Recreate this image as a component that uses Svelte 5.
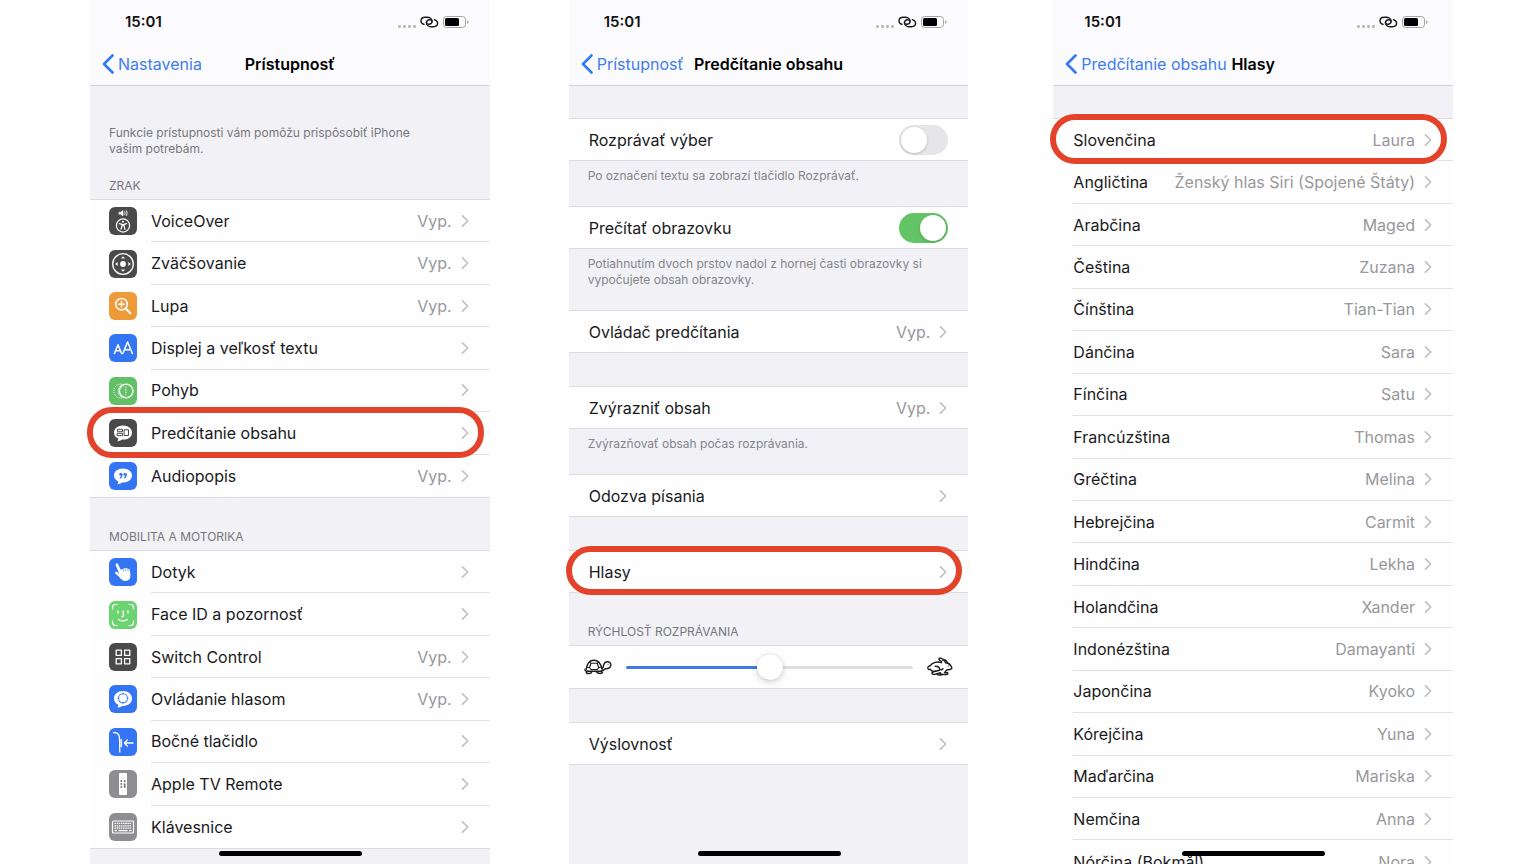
<script>
  const vision = [
    { icon: 'voiceover', label: 'VoiceOver', value: 'Vyp.', color: '#4a4a4b' },
    { icon: 'zoom', label: 'Zväčšovanie', value: 'Vyp.', color: '#4a4a4b' },
    { icon: 'magnifier', label: 'Lupa', value: 'Vyp.', color: '#ee9a38' },
    { icon: 'text', label: 'Displej a veľkosť textu', color: '#3475f3' },
    { icon: 'motion', label: 'Pohyb', color: '#62c166' },
    { icon: 'spoken', label: 'Predčítanie obsahu', color: '#4a4a4b', marked: true },
    { icon: 'audio', label: 'Audiopopis', value: 'Vyp.', color: '#3475f3' }
  ];
  const motor = [
    { icon: 'touch', label: 'Dotyk', color: '#3475f3' },
    { icon: 'face', label: 'Face ID a pozornosť', color: '#6bd36f' },
    { icon: 'switch', label: 'Switch Control', value: 'Vyp.', color: '#4a4a4b' },
    { icon: 'voice', label: 'Ovládanie hlasom', value: 'Vyp.', color: '#3475f3' },
    { icon: 'side', label: 'Bočné tlačidlo', color: '#3475f3' },
    { icon: 'remote', label: 'Apple TV Remote', color: '#8e8e92' },
    { icon: 'keyboard', label: 'Klávesnice', color: '#8e8e92' }
  ];
  const voices = [
    ['Slovenčina', 'Laura'],
    ['Angličtina', 'Ženský hlas Siri (Spojené Štáty)'],
    ['Arabčina', 'Maged'],
    ['Čeština', 'Zuzana'],
    ['Čínština', 'Tian-Tian'],
    ['Dánčina', 'Sara'],
    ['Fínčina', 'Satu'],
    ['Francúzština', 'Thomas'],
    ['Gréčtina', 'Melina'],
    ['Hebrejčina', 'Carmit'],
    ['Hindčina', 'Lekha'],
    ['Holandčina', 'Xander'],
    ['Indonézština', 'Damayanti'],
    ['Japončina', 'Kyoko'],
    ['Kórejčina', 'Yuna'],
    ['Maďarčina', 'Mariska'],
    ['Nemčina', 'Anna'],
    ['Nórčina (Bokmål)', 'Nora']
  ].map(([label, value], i) => ({ label, value, marked: i === 0 }));

  let speakSelection = $state(false);
  let speakScreen = $state(true);
  let rate = $state(50);
</script>

{#snippet header(back, title)}
  <header>
    <div class="status">
      <span class="time">15:01</span>
      <svg class="indicators" width="71" height="14" viewBox="0 0 71 14" aria-hidden="true">
        <g fill="#bdbdc1">
          <rect x="0" y="10" width="3" height="3" rx="1" /><rect x="5" y="10" width="3" height="3" rx="1" />
          <rect x="10" y="10" width="3" height="3" rx="1" /><rect x="15" y="10" width="3" height="3" rx="1" />
        </g>
        <g fill="none" stroke="#1c1c1e" stroke-width="1.400" stroke-linecap="round">
          <path d="M26 9.400C24.300 8.800 23 7.500 23 5.900C23 3.700 24.800 2.300 27.200 2.300H29C31.800 2.300 34 3.900 34 6.100C34 8 32.600 9.300 30.700 9.300C29.300 9.300 28.300 8.400 28.400 7.100" />
          <path d="M36.400 4.600C38.200 5.200 39.600 6.500 39.600 8.100C39.600 10.300 37.800 11.700 35.400 11.700H33.600C30.800 11.700 28.500 10.100 28.500 7.900C28.500 6 30 4.700 31.900 4.700C33.300 4.700 34.200 5.600 34.100 6.900" />
        </g>
        <rect x="45.500" y="1.500" width="22" height="11" rx="3" fill="none" stroke="#a4a4a8" />
        <rect x="47" y="3" width="14" height="8" rx="1.500" fill="#000" />
        <path d="M69 5.200V8.800Q70.600 8.400 70.600 7T69 5.200Z" fill="#a4a4a8" />
      </svg>
    </div>
    <nav>
      <button class="back">
        <svg width="12" height="20" viewBox="0 0 12 20" aria-hidden="true"><path d="M10.500 1.500L2 10L10.500 18.500" fill="none" stroke="#3478f6" stroke-width="2.600" stroke-linecap="round" stroke-linejoin="round" /></svg>
        <span>{back}</span>
      </button>
      <h1>{title}</h1>
    </nav>
  </header>
{/snippet}

{#snippet icon(name)}
  <svg width="28" height="28" viewBox="0 0 28 28" fill="none" stroke="#fff" stroke-linecap="round" stroke-linejoin="round" aria-hidden="true">
    {#if name === 'voiceover'}
      <path d="M10.300 5.200H11.800L14 3.400V9L11.800 7.200H10.300Z" fill="#fff" stroke-width=".6" />
      <path d="M15.800 4.600Q16.800 6.200 15.800 7.800M17.600 3.800Q19 6.200 17.600 8.600" stroke-width=".9" />
      <circle cx="14" cy="18.500" r="6.600" stroke-width="1.200" />
      <circle cx="14" cy="14.700" r="1" fill="#fff" stroke="none" />
      <path d="M10.400 16.700L13 17.300V19L12 22.300M17.600 16.700L15 17.300V19L16 22.300M13 17.500H15M13.600 18.500H14.400" stroke-width="1.200" />
    {:else if name === 'zoom'}
      <circle cx="14" cy="14" r="10.300" stroke-width="1.300" />
      <circle cx="14" cy="14" r="2.900" fill="#fff" stroke="none" />
      <path d="M14 6.200L16 8.600H12ZM14 21.800L16 19.400H12ZM6.200 14L8.600 12V16ZM21.800 14L19.400 12V16Z" fill="#fff" stroke="none" />
    {:else if name === 'magnifier'}
      <circle cx="12.500" cy="12.200" r="5.800" stroke-width="1.500" />
      <path d="M17 16.800L21.300 21.200" stroke-width="2.100" />
      <path d="M12.500 9.400V15M9.700 12.200H15.300" stroke-width="1.500" />
    {:else if name === 'text'}
      <path d="M5.400 19.500L9 10.700L12.600 19.500M6.700 16.700H11.300" stroke-width="1.500" />
      <path d="M13.800 19.500L18.600 8L23.400 19.500M15.500 15.800H21.700" stroke-width="1.500" />
    {:else if name === 'motion'}
      <circle cx="17.200" cy="14" r="6.800" stroke-width="1.300" />
      <path d="M14.200 7.600A6.900 6.900 0 1 0 14.200 20.400" stroke-width="1" stroke-dasharray=".3 1.800" />
      <path d="M12.200 8.200A6.700 6.700 0 0 0 12.200 19.800" stroke-width=".6" />
      <path d="M16.800 10V18" stroke-width="1.200" stroke-dasharray=".3 2.300" />
    {:else if name === 'spoken'}
      <path d="M14 6.500C19.200 6.500 23 9.500 23 13.700S19.200 20.600 14.300 20.600L13.200 20.600Q11.200 22.200 8.200 22.300Q9.400 21 9.300 19.500C6.700 18.300 5 16.300 5 13.700C5 9.500 8.800 6.500 14 6.500Z" fill="#fff" stroke="none" />
      <path d="M9 10.300H13.500V12.700H9ZM8.500 14.300H13.500V16.700H8.500ZM15.500 10.800H19.500V16.500H15.500Z" stroke="#4a4a4b" stroke-width="1" />
    {:else if name === 'audio'}
      <path d="M14 6.500C19.200 6.500 23 9.500 23 13.500S19.200 20.500 14.300 20.500L13.200 20.500Q11.200 22.200 8.200 22.300Q9.400 21 9.300 19.400C6.700 18.200 5 16.200 5 13.500C5 9.500 8.800 6.500 14 6.500Z" fill="#fff" stroke="none" />
      <path d="M13 12.300Q13.300 14.800 11.300 15.900M17.200 12.300Q17.500 14.800 15.500 15.900" stroke="#3475f3" stroke-width="1.200" />
      <circle cx="11.800" cy="12.200" r="1.500" fill="#3475f3" stroke="none" /><circle cx="16" cy="12.200" r="1.500" fill="#3475f3" stroke="none" />
    {:else if name === 'touch'}
      <path d="M7 5.700Q8.400 4.700 9.200 6.400L12 12.200Q12.300 10.500 14 11Q15 9.500 16.400 10.600Q17.700 9.400 18.900 10.900Q20.500 10.200 20.900 12.200L21.400 16.500Q21.900 20 19.600 21.900Q16.500 23.800 13.700 22.200Q11.500 20.900 9.500 18.300L6 15.200Q5.500 13.400 7.700 13.800L10.200 15.300L6.600 7.200Q6.300 6.200 7 5.700Z" fill="#fff" stroke="none" />
      <path d="M14.200 11.400L14.600 13.300M16.700 11L16.900 12.900M19 11.400L19.100 13" stroke="#3475f3" stroke-width=".6" />
    {:else if name === 'face'}
      <path d="M3.500 8V6.500Q3.500 3.500 6.500 3.500H8M20 3.500H21.500Q24.500 3.500 24.500 6.500V8M24.500 20V21.500Q24.500 24.500 21.500 24.500H20M8 24.500H6.500Q3.500 24.500 3.500 21.500V20" stroke-width="1.200" />
      <path d="M9 10V11.900M19 10V11.900M14.300 10V14.500Q14.300 15.900 12.900 15.800M9.700 18.500Q14 21.700 18.300 18.500" stroke-width="1.400" />
    {:else if name === 'switch'}
      <path d="M7.200 7.200H12.400V12.400H7.200ZM15.600 7.200H20.800V12.400H15.600ZM7.200 15.600H12.400V20.800H7.200ZM15.600 15.600H20.800V20.800H15.600Z" stroke-width="1.300" />
    {:else if name === 'voice'}
      <path d="M14 6C19.200 6 23 9.200 23 13.500S19.200 20.900 14.300 20.900L13.200 20.900Q11.200 22.500 8.200 22.600Q9.400 21.300 9.300 19.800C6.700 18.500 5 16.300 5 13.500C5 9.200 8.800 6 14 6Z" fill="#fff" stroke="none" />
      <circle cx="14" cy="13.300" r="4.600" stroke="#3475f3" stroke-width="1.100" />
      <path d="M14 7.500V19.100M8.200 13.300H19.800" stroke="#fff" stroke-width="3" stroke-linecap="butt" />
      <path d="M14 7.500L15.700 9.500H12.300ZM14 19.100L15.700 17.100H12.300ZM8.200 13.300L10.200 11.600V15ZM19.800 13.300L17.800 11.600V15Z" fill="#3475f3" stroke="none" />
    {:else if name === 'side'}
      <path d="M4.500 4.700Q9.700 4.200 10.500 9.500L10.800 24" stroke-width="1.300" />
      <path d="M12.200 11.800V18.400" stroke-width="1.600" />
      <path d="M15.300 15H24M18.300 12L15.300 15L18.300 18" stroke-width="1.300" />
    {:else if name === 'remote'}
      <rect x="10" y="3" width="8" height="22" rx="1" fill="#fff" stroke="none" />
      <g fill="#77777b" stroke="none"><circle cx="12.300" cy="11" r="1" /><circle cx="15.700" cy="11" r="1" /><circle cx="12.300" cy="14" r="1" /><rect x="14.800" y="13.200" width="1.800" height="4.800" rx=".9" /><circle cx="12.300" cy="17" r="1" /></g>
      <path d="M12 8.300H16" stroke="#c8c8ca" stroke-width=".6" />
    {:else if name === 'keyboard'}
      <rect x="3.500" y="8" width="21" height="12" rx="1" stroke-width="1.200" />
      <path d="M5.500 10.300H22.500M5.500 12.800H22.500M5.500 15.200H22.500" stroke-width="1.300" stroke-linecap="butt" stroke-dasharray="1.500 .65" />
      <path d="M5.500 17.600H8M9.500 17.600H18.500M20 17.600H22.500" stroke-width="1.300" stroke-linecap="butt" />
    {/if}
  </svg>
{/snippet}

{#snippet row(item)}
  <li>
    <button class="row">
      {#if item.icon}
        <span class="icon" style:background={item.color}>{@render icon(item.icon)}</span>
      {/if}
      <span class="body">
        <span class="label">{item.label}</span>
        {#if item.value}<span class="value">{item.value}</span>{/if}
        <svg class="chevron" width="8" height="14" viewBox="0 0 8 14" aria-hidden="true"><path d="M1.500 1.800L6.700 7L1.500 12.200" fill="none" stroke="#c2c2c5" stroke-width="1.700" stroke-linecap="round" stroke-linejoin="round" /></svg>
      </span>
    </button>
    {#if item.marked}<span class="mark"></span>{/if}
  </li>
{/snippet}

<main>
  <section class="screen">
    {@render header('Nastavenia', 'Prístupnosť')}
    <p class="intro">Funkcie prístupnosti vám pomôžu prispôsobiť iPhone vašim potrebám.</p>
    <h2 class="first">ZRAK</h2>
    <ul class="seven">
      {#each vision as item}{@render row(item)}{/each}
    </ul>
    <h2>MOBILITA A MOTORIKA</h2>
    <ul class="seven">
      {#each motor as item}{@render row(item)}{/each}
    </ul>
    <span class="home"></span>
  </section>

  <section class="screen">
    {@render header('Prístupnosť', 'Predčítanie obsahu')}
    <div class="gap"></div>
    <div class="group">
      <label for="speak-selection">Rozprávať výber</label>
      <input id="speak-selection" type="checkbox" role="switch" bind:checked={speakSelection} />
    </div>
    <p class="note">Po označení textu sa zobrazí tlačidlo Rozprávať.</p>
    <div class="group">
      <label for="speak-screen">Prečítať obrazovku</label>
      <input id="speak-screen" type="checkbox" role="switch" bind:checked={speakScreen} />
    </div>
    <p class="note">Potiahnutím dvoch prstov nadol z hornej časti obrazovky si vypočujete obsah obrazovky.</p>
    <ul class="plain">{@render row({ label: 'Ovládač predčítania', value: 'Vyp.' })}</ul>
    <div class="gap"></div>
    <ul class="plain">{@render row({ label: 'Zvýrazniť obsah', value: 'Vyp.' })}</ul>
    <p class="note">Zvýrazňovať obsah počas rozprávania.</p>
    <ul class="plain">{@render row({ label: 'Odozva písania' })}</ul>
    <div class="gap"></div>
    <ul class="plain">{@render row({ label: 'Hlasy', marked: true })}</ul>
    <h2 id="rate-title">RÝCHLOSŤ ROZPRÁVANIA</h2>
    <div class="group slider">
      <svg width="28" height="18" viewBox="0 0 28 18" fill="none" stroke="#1c1c1e" stroke-width="1.400" stroke-linecap="round" stroke-linejoin="round" aria-hidden="true">
        <path d="M2.300 11.200C3 6 5.700 2.300 10 2.300S16.800 5.800 18.300 11.200" />
        <path d="M1 11.200Q.8 13.200 3 13.200H16.500Q20 13 21.300 10.700Q25.600 11 26.600 8.200C27.600 5 25.300 3.500 23 3.700C20.300 4 19.500 6.300 19.200 9.300L17.700 10.500" />
        <path d="M7 5.300H13.200L14.700 9.500L13.300 11.500H7L5.500 9.500ZM7 5.300L5.500 3.900M13.200 5.300L14.700 4M5.500 9.500L3 9.200M14.700 9.500L17.400 9" stroke-width="1.100" />
        <path d="M3.300 13.200L2.200 14.800Q4.800 16.300 7.200 14.900L8 13.400M12 13.400L13.800 15Q16.500 16 18.500 14.700L17.400 13.200" />
        <circle cx="24" cy="6.300" r=".5" fill="#1c1c1e" stroke="none" />
      </svg>
      <input type="range" min="0" max="100" bind:value={rate} aria-labelledby="rate-title" style:--fill="{rate}%" />
      <svg width="26" height="20" viewBox="0 0 26 20" fill="none" stroke="#1c1c1e" stroke-width="1.400" stroke-linecap="round" stroke-linejoin="round" aria-hidden="true">
        <path d="M14.500 4.400Q11 2.500 12.300 1.200Q15.700.4 18.800 5.800Q22.200 6 24.300 9.500Q25.900 12.300 22.500 12.500L19.800 13L17.500 15.600H20.300Q21.600 17 19.700 17.500H14.700L13 15.800" />
        <path d="M15.800 3.200Q18.500 1.500 20.800 6.200" />
        <path d="M14.600 5.700C10 4.100 5.300 5.500 3.300 8.700Q.3 9.200 1 11.500Q1.500 13 3.500 12.400Q5 15.300 8.500 14.200L12.300 13.200" />
        <path d="M8.200 9.200Q12.500 9.200 12.700 12.200Q14.500 13.500 16 11.700M8.500 14.200Q4.800 14.700 5 16.300Q5.500 17.900 8.500 17.200L13 15.800M9.500 16.900Q12 18.800 14.700 17.500" />
        <circle cx="21.300" cy="9" r=".6" fill="#1c1c1e" stroke="none" />
      </svg>
    </div>
    <div class="gap"></div>
    <ul class="plain">{@render row({ label: 'Výslovnosť' })}</ul>
    <span class="home"></span>
  </section>

  <section class="screen last">
    {@render header('Predčítanie obsahu', 'Hlasy')}
    <div class="gap"></div>
    <ul class="plain voices">
      {#each voices as item}{@render row(item)}{/each}
    </ul>
    <span class="home"></span>
  </section>
</main>

<style>
  :global(body) { margin: 0; background: #fff; }
  main {
    display: flex;
    gap: 79px;
    height: 100vh;
    padding: 0 83px 0 90px;
    box-sizing: border-box;
    overflow: hidden;
    font-family: Inter, 'Liberation Sans', sans-serif;
    font-size: 16px;
    color: #1a1a1c;
  }
  .screen { position: relative; flex: 1 1 0; min-width: 0; background: #f1f1f6; }
  .last { margin-left: 6px; }
  button { font: inherit; color: inherit; background: none; border: 0; padding: 0; margin: 0; text-align: left; cursor: pointer; }
  header { background: #fbfbfd; border-bottom: 1px solid #d3d3d7; }
  .status { display: flex; align-items: center; justify-content: space-between; height: 43px; padding: 0 21px 0 35px; }
  .last .status { padding: 0 25px 0 31px; }
  .time { font-size: 15px; font-weight: 600; color: #111; }
  nav { display: grid; grid-template-columns: 1fr auto 1fr; align-items: center; height: 42px; }
  .back { display: flex; align-items: center; gap: 4px; padding-left: 12px; color: #3f7df0; white-space: nowrap; }
  h1 { margin: 0; font-size: 16px; font-weight: 600; color: #000; white-space: nowrap; }
  h2, .intro, .note { margin: 0; font-size: 12px; font-weight: 400; line-height: 16px; color: #77777c; }
  .intro { padding: 39px 60px 0 19px; }
  .note { padding: 7px 19px 22px; color: #85858a; }
  h2 { padding: 31px 19px 5px; }
  h2.first { padding-top: 21px; }
  .gap { height: 33px; }
  header + .gap { height: 32px; }
  ul, .group {
    display: flex;
    box-sizing: border-box;
    min-height: 43px;
    margin: 0;
    padding: 0;
    background: #fefefe;
    border: solid #dcdce0;
    border-width: 1px 0;
  }
  ul { flex-direction: column; list-style: none; }
  .seven { min-height: 299px; }
  .voices { min-height: 766px; }
  li { position: relative; display: flex; flex: 1 1 0; }
  .row { display: flex; align-items: stretch; gap: 14px; width: 100%; padding-left: 19px; }
  .plain .row { padding-left: 20px; }
  .icon { align-self: center; width: 28px; height: 28px; border-radius: 6px; overflow: hidden; }
  .icon svg { display: block; }
  .body { display: flex; flex: 1; align-items: center; gap: 9px; min-width: 0; padding-right: 21px; }
  li:not(:last-child) .body { border-bottom: 1px solid #e2e2e5; }
  .label { flex: 1; white-space: nowrap; }
  .value { color: #98989c; white-space: nowrap; }
  .mark {
    position: absolute;
    z-index: 1;
    inset: -5px 6px -3px -3px;
    border: 6px solid #e2432a;
    border-radius: 25px;
    pointer-events: none;
  }
  .group { min-height: 43px; align-items: center; padding: 0 20px; }
  .group label { flex: 1; }
  input { appearance: none; margin: 0; cursor: pointer; }
  input[type='checkbox'] { position: relative; width: 49px; height: 30px; border-radius: 15px; background: #e6e6e9; }
  input[type='checkbox']::before {
    content: '';
    position: absolute;
    top: 2px;
    left: 2px;
    width: 26px;
    height: 26px;
    border-radius: 50%;
    background: #fff;
    box-shadow: 0 1px 3px #0003;
  }
  input[type='checkbox']:checked { background: #62c466; }
  input[type='checkbox']:checked::before { left: 21px; }
  h2 + .slider { min-height: 44px; gap: 14px; padding: 0 15px; }
  input[type='range'] { flex: 1; min-width: 0; height: 28px; background: none; }
  input[type='range']::-webkit-slider-runnable-track {
    height: 3px;
    border-radius: 2px;
    background: linear-gradient(to right, #3f79e4 var(--fill), #dedee0 var(--fill));
  }
  input[type='range']::-webkit-slider-thumb {
    appearance: none;
    width: 26px;
    height: 26px;
    margin-top: -12px;
    border-radius: 50%;
    background: #fff;
    box-shadow: 0 2px 6px #0000002e, 0 0 1px #0003;
  }
  .home {
    position: absolute;
    left: 50%;
    bottom: 8px;
    width: 143px;
    height: 5px;
    margin-left: -71px;
    border-radius: 3px;
    background: #000;
    z-index: 2;
  }
</style>
